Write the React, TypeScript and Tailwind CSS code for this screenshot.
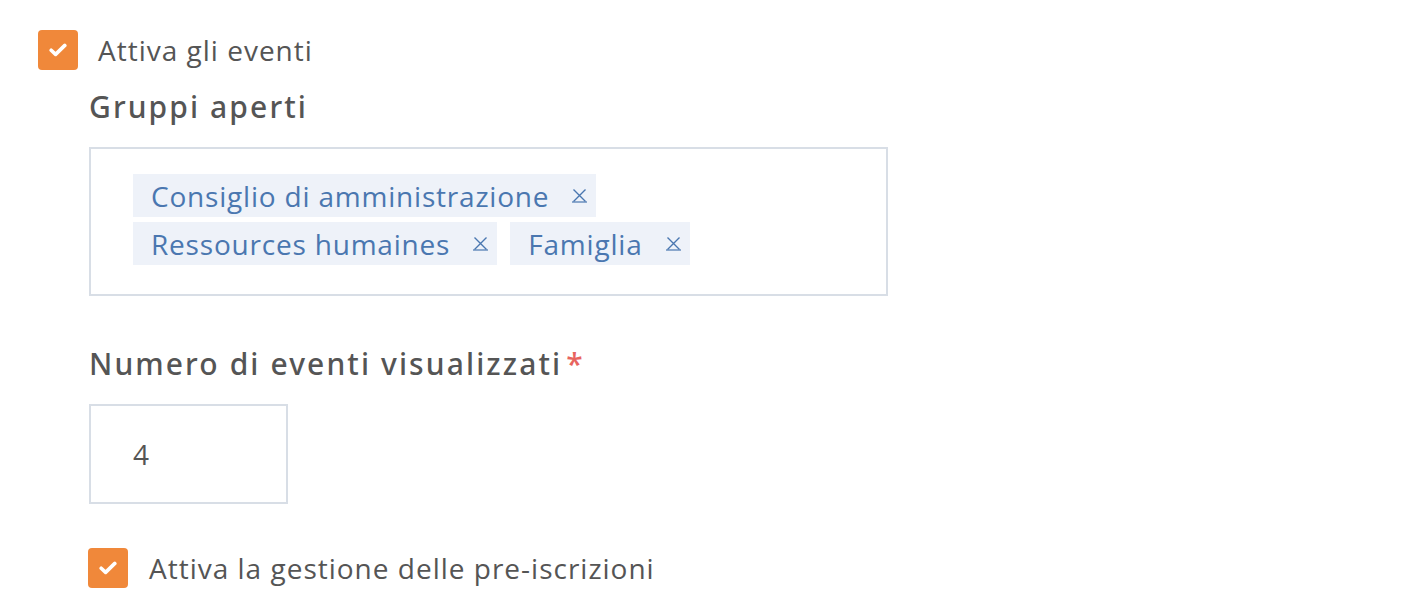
import React from 'react'

const Check = () => (
  <span className="flex h-10 w-10 shrink-0 items-center justify-center rounded-[4px] bg-[#f0883a]">
    <svg width="18" height="14" viewBox="0 0 18 14" fill="none">
      <path d="M2.2 7.2 L6.6 11.4 L15.8 2.4" stroke="white" strokeWidth="3.6" strokeLinecap="round" strokeLinejoin="round" />
    </svg>
  </span>
)

const Tag = ({ label }: { label: string }) => (
  <span className="flex h-[43px] items-center bg-[#eef2f9] pl-[18px] pr-[8px] text-[28px] tracking-[0.8px] text-[#4a77b0]">
    <span>{label}</span>
    <svg className="ml-[22px]" width="17" height="17" viewBox="0 0 17 17">
      <path d="M2.5 2.5 L14.5 14.5 M14.5 2.5 L2.5 14.5" stroke="#4a77b0" strokeWidth="1.4" />
      <path d="M1 15 H16" stroke="#4a77b0" strokeWidth="1.2" />
    </svg>
  </span>
)

export default function App() {
  return (
    <div className="min-h-[607px] bg-white pt-[30px] font-['Open_Sans',sans-serif] text-[#555555]">
      <label className="ml-[38px] flex items-center gap-[20px]">
        <Check />
        <span className="text-[28px] leading-[40px] tracking-[1px]">Attiva gli eventi</span>
      </label>

      <div className="ml-[89px] mt-[17px]">
        <h2 className="font-['Noto_Sans',sans-serif] text-[30px] font-medium leading-[40px] tracking-[2.1px]">Gruppi aperti</h2>

        <div className="mt-[20px] h-[149px] w-[799px] border-2 border-[#d8dee6] px-[42px] pt-[25px]">
          <div className="flex flex-col items-start gap-y-[5px]">
            <div className="flex gap-x-[13px]">
              <Tag label="Consiglio di amministrazione" />
            </div>
            <div className="flex gap-x-[13px]">
              <Tag label="Ressources humaines" />
              <Tag label="Famiglia" />
            </div>
          </div>
        </div>

        <h2 className="mt-[48px] font-['Noto_Sans',sans-serif] text-[30px] font-medium leading-[40px] tracking-[2.1px]">
          Numero di eventi visualizzati<span className="ml-[4px] text-[#e8645e]">*</span>
        </h2>

        <div className="mt-[20px] flex h-[100px] w-[199px] items-center border-2 border-[#d8dee6] pl-[42px] text-[28px]">
          4
        </div>
      </div>

      <label className="ml-[88px] mt-[44px] flex items-center gap-[21px]">
        <Check />
        <span className="text-[28px] leading-[40px] tracking-[1px]">Attiva la gestione delle pre-iscrizioni</span>
      </label>
    </div>
  )
}
